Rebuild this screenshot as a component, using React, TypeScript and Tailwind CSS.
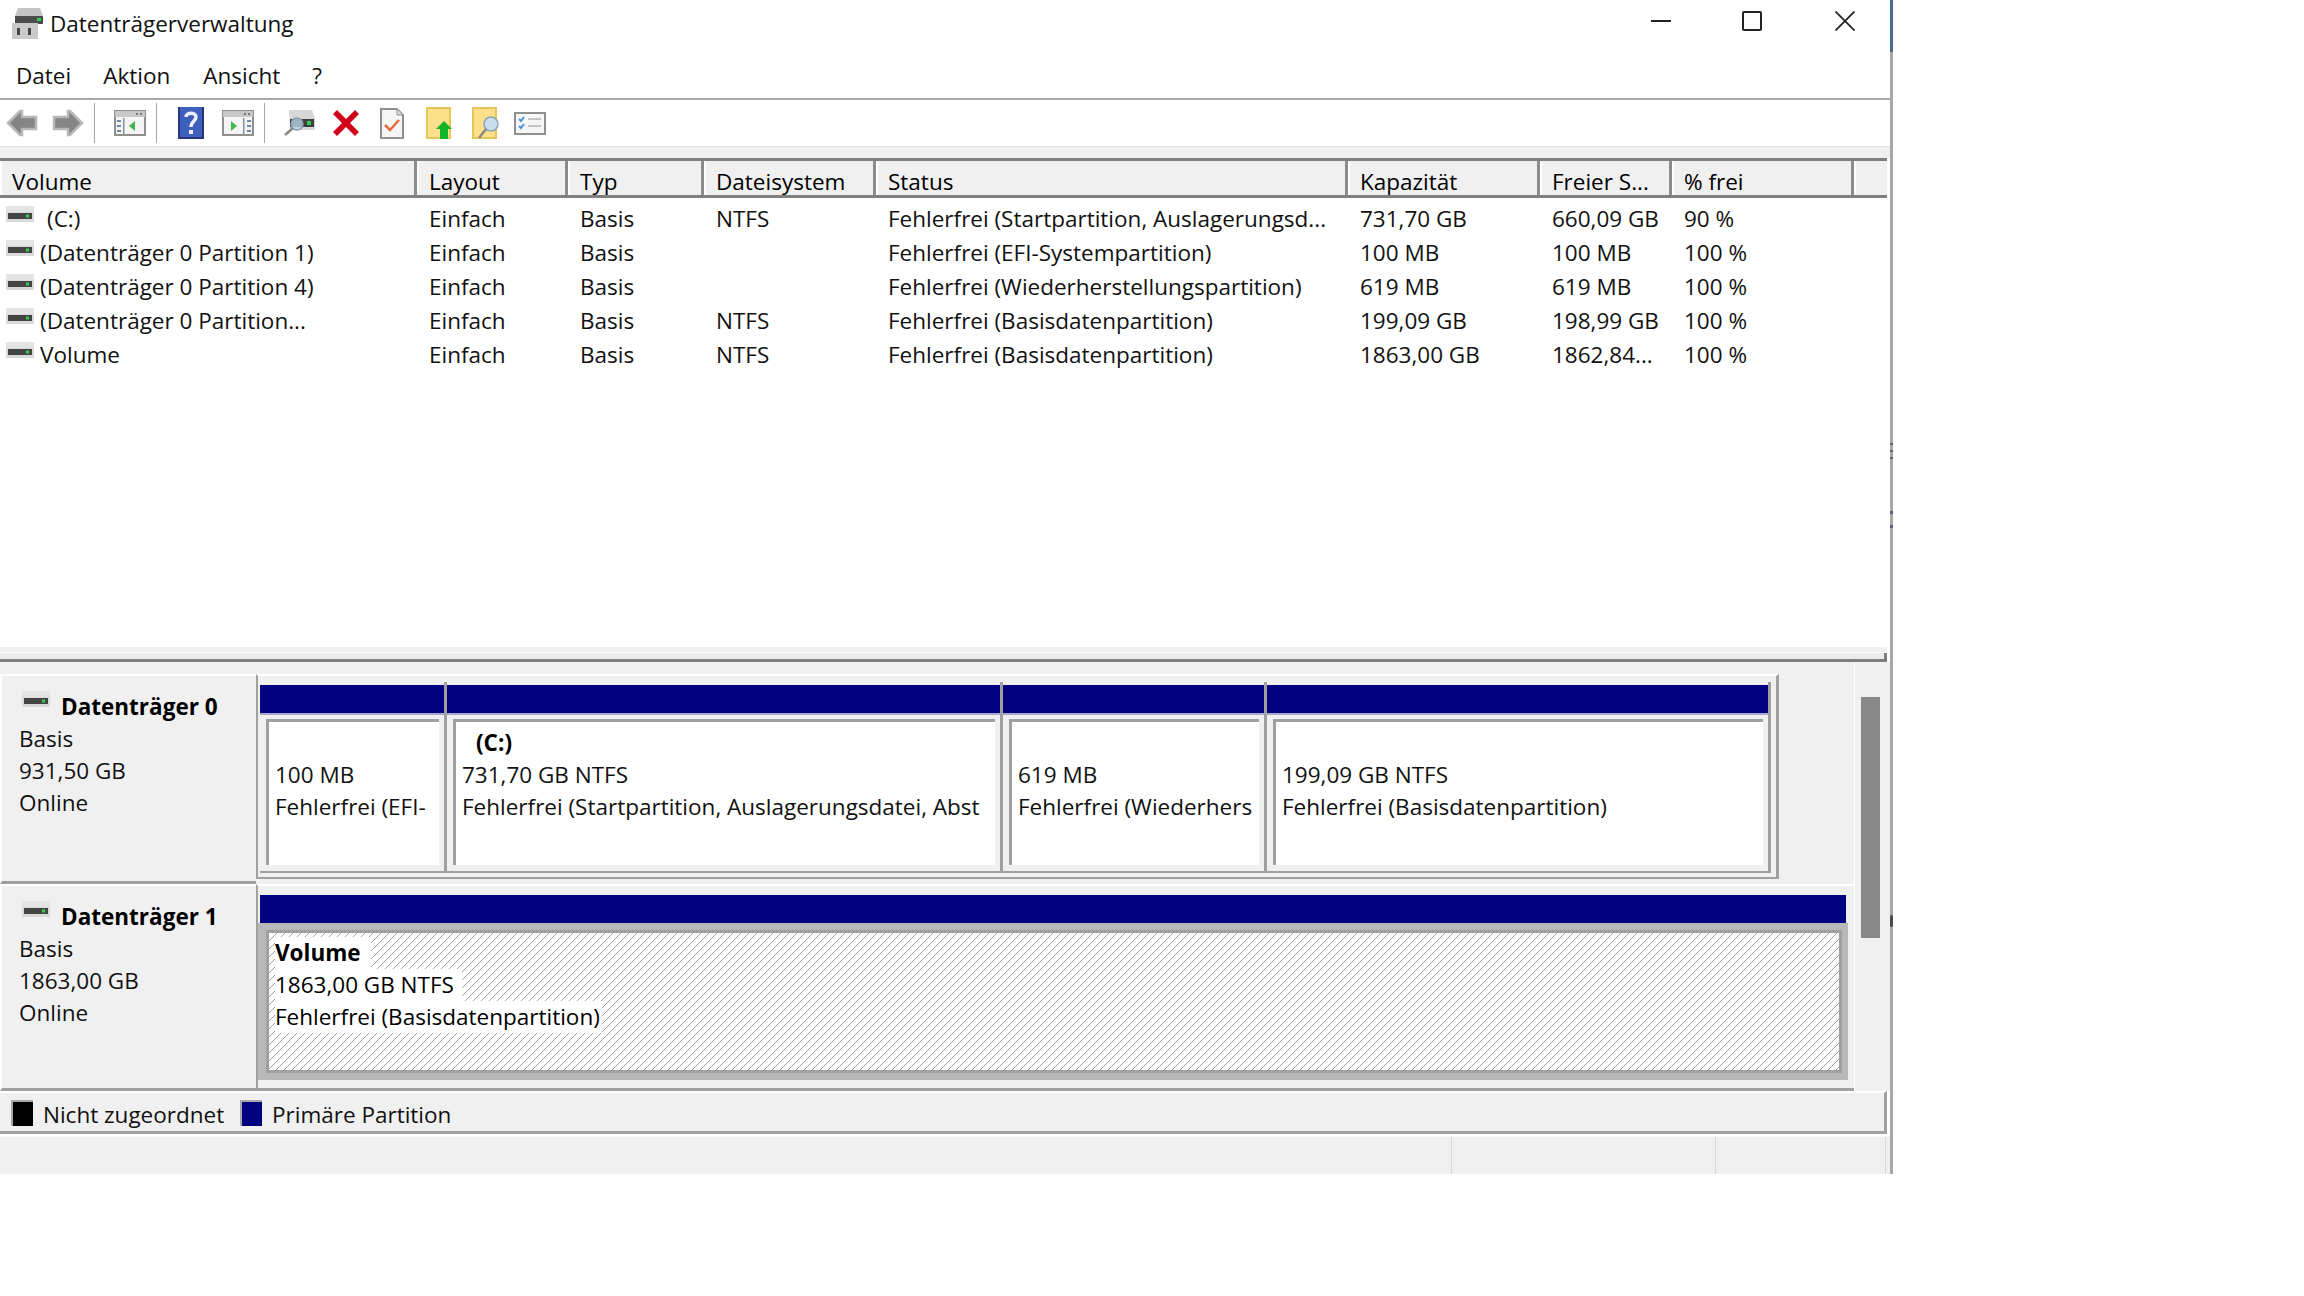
import { ReactNode } from "react";

const font = "font-['Open_Sans','Noto_Sans',sans-serif]";

const columns = [
  { title: "Volume", width: "w-[417px]" },
  { title: "Layout", width: "w-[151px]" },
  { title: "Typ", width: "w-[136px]" },
  { title: "Dateisystem", width: "w-[172px]" },
  { title: "Status", width: "w-[472px]" },
  { title: "Kapazität", width: "w-[192px]" },
  { title: "Freier S...", width: "w-[132px]" },
  { title: "% frei", width: "w-[182px]" },
  { title: "", width: "w-[33px]" },
];

const rows = [
  ["(C:)", "Einfach", "Basis", "NTFS", "Fehlerfrei (Startpartition, Auslagerungsd...", "731,70 GB", "660,09 GB", "90 %"],
  ["(Datenträger 0 Partition 1)", "Einfach", "Basis", "", "Fehlerfrei (EFI-Systempartition)", "100 MB", "100 MB", "100 %"],
  ["(Datenträger 0 Partition 4)", "Einfach", "Basis", "", "Fehlerfrei (Wiederherstellungspartition)", "619 MB", "619 MB", "100 %"],
  ["(Datenträger 0 Partition...", "Einfach", "Basis", "NTFS", "Fehlerfrei (Basisdatenpartition)", "199,09 GB", "198,99 GB", "100 %"],
  ["Volume", "Einfach", "Basis", "NTFS", "Fehlerfrei (Basisdatenpartition)", "1863,00 GB", "1862,84...", "100 %"],
];

const DriveIcon = ({ className }: { className: string }) => (
  <svg viewBox="0 0 28 16" className={className}>
    <rect x="0" y="0" width="28" height="16" fill="#d9d9d9" />
    <rect x="0" y="0" width="28" height="6" fill="#e4e4e4" />
    <rect x="2" y="7" width="24" height="6" fill="#444" />
    <rect x="20" y="8.5" width="3" height="3" fill="#35d04a" />
  </svg>
);

const BackIcon = ({ flip }: { flip?: boolean }) => (
  <svg viewBox="0 0 32 28" className={`w-[32px] h-[28px] ${flip ? "-scale-x-100" : ""}`}>
    <path d="M2 14 L14 2 L16 2 L16 8 L30 8 L30 20 L16 20 L16 26 L14 26 Z" fill="#858585" stroke="#b8b8b8" strokeWidth="2.5" />
  </svg>
);

const PaneIcon = ({ right }: { right?: boolean }) => (
  <svg viewBox="0 0 32 26" className="w-[32px] h-[26px]">
    <rect x="1" y="1" width="30" height="24" fill="#f4f4f4" stroke="#8f8f8f" strokeWidth="2" />
    <rect x="1" y="1" width="30" height="6" fill="#c8c8c8" />
    <rect x="22" y="3" width="2" height="2" fill="#777" />
    <rect x="26" y="3" width="2" height="2" fill="#777" />
    <rect x={right ? 21 : 9} y="8" width="1.5" height="16" fill="#8f8f8f" />
    {right ? (
      <>
        <path d="M9 11 L15 16 L9 21 Z" fill="#43b649" />
        <path d="M25 11 h4 M25 16 h4 M25 21 h4" stroke="#6d87a8" strokeWidth="2" />
      </>
    ) : (
      <>
        <path d="M21 11 L15 16 L21 21 Z" fill="#43b649" />
        <path d="M3 11 h4 M3 16 h4 M3 21 h4" stroke="#6d87a8" strokeWidth="2" />
      </>
    )}
  </svg>
);

const HelpIcon = () => (
  <svg viewBox="0 0 26 32" className="w-[26px] h-[32px]">
    <rect width="26" height="32" fill="#3f5fbd" />
    <rect x="0" y="0" width="2" height="32" fill="#26357f" />
    <rect x="24" y="0" width="2" height="32" fill="#26357f" />
    <rect x="0" y="30" width="26" height="2" fill="#26357f" />
    <path d="M8 10 C8 5 18 5 18 10 C18 14 13 14 13 20" fill="none" stroke="#eef" strokeWidth="3.5" />
    <rect x="11" y="23" width="4" height="4" fill="#eef" />
  </svg>
);

const SearchDriveIcon = () => (
  <svg viewBox="0 0 31 26" className="w-[31px] h-[26px]">
    <path d="M5 0 H28 L31 8 V20 H6 Z" fill="#d7d7d7" />
    <rect x="6" y="9" width="24" height="8" fill="#3d3d3d" />
    <rect x="23" y="11" width="4" height="4" fill="#35d04a" />
    <circle cx="13" cy="14" r="6" fill="#b9d3e6" fillOpacity="0.8" stroke="#8a9aa6" strokeWidth="1.5" />
    <path d="M9 18 L1 25" stroke="#888" strokeWidth="2.5" />
  </svg>
);

const DeleteIcon = () => (
  <svg viewBox="0 0 28 28" className="w-[28px] h-[28px]">
    <path d="M5 1 L14 10 L23 1 L27 5 L18 14 L27 23 L23 27 L14 18 L5 27 L1 23 L10 14 L1 5 Z" fill="#d0021b" />
  </svg>
);

const DocCheckIcon = () => (
  <svg viewBox="0 0 24 31" className="w-[24px] h-[31px]">
    <path d="M1 1 H17 L23 7 V30 H1 Z" fill="#f6f6f6" stroke="#8f8f8f" strokeWidth="2" />
    <path d="M17 1 V7 H23" fill="#ddd" stroke="#8f8f8f" />
    <path d="M5 17 L10 22 L19 12" fill="none" stroke="#e9693a" strokeWidth="2.5" />
  </svg>
);

const FolderUpIcon = () => (
  <svg viewBox="0 0 26 32" className="w-[26px] h-[32px]">
    <rect x="1" y="1" width="23" height="30" fill="#fde08a" stroke="#e6c65a" strokeWidth="2" />
    <path d="M18 14 L26 22 H22 V32 H14 V22 H10 Z" fill="#11b52a" />
  </svg>
);

const FolderSearchIcon = () => (
  <svg viewBox="0 0 28 32" className="w-[28px] h-[32px]">
    <rect x="1" y="1" width="23" height="30" fill="#fde08a" stroke="#e6c65a" strokeWidth="2" />
    <circle cx="19" cy="17" r="7" fill="#c9dfee" stroke="#8ba3b5" strokeWidth="1.5" />
    <path d="M14 22 L7 31" stroke="#888" strokeWidth="2.5" />
  </svg>
);

const TaskListIcon = () => (
  <svg viewBox="0 0 32 24" className="w-[32px] h-[24px]">
    <rect x="1" y="2" width="30" height="21" fill="#f6f6f6" stroke="#8f8f8f" strokeWidth="2" />
    <path d="M5 8 L7 10 L10 6 M5 15 L7 17 L10 13" fill="none" stroke="#4a90d9" strokeWidth="2" />
    <path d="M14 8 h13 M14 15 h13" stroke="#c4c4c4" strokeWidth="2" />
  </svg>
);

const ToolSep = () => <div className="w-[1px] h-[40px] bg-[#a8a8a8]" />;

const Toolbar = () => (
  <div className="h-[47px] bg-white border-b-[1px] border-[#e4e4e4] flex items-center pl-[6px]">
    <BackIcon />
    <div className="w-[14px]" />
    <BackIcon flip />
    <div className="w-[10px]" />
    <ToolSep />
    <div className="w-[19px]" />
    <PaneIcon />
    <div className="w-[10px]" />
    <ToolSep />
    <div className="w-[21px]" />
    <HelpIcon />
    <div className="w-[18px]" />
    <PaneIcon right />
    <div className="w-[10px]" />
    <ToolSep />
    <div className="w-[19px]" />
    <SearchDriveIcon />
    <div className="w-[17px]" />
    <DeleteIcon />
    <div className="w-[20px]" />
    <DocCheckIcon />
    <div className="w-[22px]" />
    <FolderUpIcon />
    <div className="w-[20px]" />
    <FolderSearchIcon />
    <div className="w-[14px]" />
    <TaskListIcon />
  </div>
);

const VolumeTable = () => (
  <div className="h-[489px] bg-white w-[1887px]">
    <div className="h-[40px] flex border-t-[3px] border-b-[3px] border-[#808080] bg-[#f0f0f0]">
      {columns.map((c, i) => (
        <div
          key={i}
          className={`${c.width} h-full pl-[10px] pt-[4px] leading-[34px] border-l-[2px] border-l-white whitespace-nowrap text-black ${c.title ? "border-r-[3px] border-[#8c8c8c]" : ""}`}
        >
          {c.title}
        </div>
      ))}
    </div>
    <div className="pt-[4px]">
      {rows.map((r, i) => (
        <div key={i} className="h-[34px] flex items-center leading-[34px] whitespace-nowrap text-[#111]">
          {r.map((v, j) => (
            <div key={j} className={`${columns[j].width} ${j === 0 ? "flex items-center pl-[6px]" : "pl-[12px]"}`}>
              {j === 0 && <DriveIcon className="w-[28px] h-[16px] mr-[6px] mt-[-10px]" />}
              <span className={j === 0 && i === 0 ? "ml-[7px]" : ""}>{v}</span>
            </div>
          ))}
        </div>
      ))}
    </div>
  </div>
);

const DiskLabel = ({ name, size, className }: { name: string; size: string; className: string }) => (
  <div className={`w-[256px] border-l-[2px] border-t-[2px] border-white border-b-[3px] border-b-[#a0a0a0] pl-[17px] pt-[15px] text-[#111] leading-[32px] ${className}`}>
    <div className="flex items-start h-[32px]">
      <DriveIcon className="w-[28px] h-[16px] ml-[3px] mr-[11px]" />
      <span className="font-bold text-black">{name}</span>
    </div>
    <div>Basis</div>
    <div>{size}</div>
    <div>Online</div>
  </div>
);

const Partition = ({ width, title, lines, pad }: { width: string; title?: string; lines: string[]; pad?: boolean }) => (
  <div className={`${width} h-[191px] shrink-0 border-r-[3px] border-b-[2px] border-[#a0a0a0] pt-[3px]`}>
    <div className="h-[30px] bg-[#000080] border-b-[2px] border-[#a8a8cc]" />
    <div className="pl-[6px] pr-[5px] pt-[4px]">
      <div className="h-[146px] bg-white border-t-[3px] border-l-[3px] border-[#a0a0a0] pl-[6px] pt-[5px] leading-[32px] whitespace-nowrap text-[#111]">
        <div className={`h-[32px] font-bold text-black ${pad ? "pl-[14px]" : ""}`}>{title}</div>
        {lines.map((l) => (
          <div key={l}>{l}</div>
        ))}
      </div>
    </div>
  </div>
);

const DiskPane = () => (
  <div className="h-[429px] flex bg-[#f0f0f0]">
    <div className="w-[1855px] border-r-[1px] border-white">
      <div className="h-[222px] flex pt-[12px]">
        <DiskLabel name="Datenträger 0" size="931,50 GB" className="h-[210px]" />
        <div className="w-[1523px] h-[205px] border-l-[2px] border-r-[3px] border-b-[2px] border-[#a0a0a0] border-t-[2px] border-t-white pl-[2px] pt-[6px] flex items-start">
          <Partition width="w-[187px]" lines={["100 MB", "Fehlerfrei (EFI-"]} />
          <Partition width="w-[556px]" title="(C:)" pad lines={["731,70 GB NTFS", "Fehlerfrei (Startpartition, Auslagerungsdatei, Abst"]} />
          <Partition width="w-[264px]" lines={["619 MB", "Fehlerfrei (Wiederhers"]} />
          <Partition width="w-[504px]" lines={["199,09 GB NTFS", "Fehlerfrei (Basisdatenpartition)"]} />
        </div>
      </div>
      <div className="h-[207px] flex">
        <DiskLabel name="Datenträger 1" size="1863,00 GB" className="h-[207px]" />
        <div className="w-[1598px] h-[207px] border-t-[2px] border-t-white border-b-[3px] border-b-[#a0a0a0] border-l-[2px] border-l-[#a0a0a0] pt-[9px]">
          <div className="w-[1590px]">
            <div className="h-[28px] w-[1586px] ml-[2px] bg-[#000080]" />
            <div className="h-[157px] bg-[#b8b8b8] pt-[7px] pl-[8px] pr-[6px]">
              <div className="h-[143px] border-[3px] border-[#a0a0a0] pl-[6px] pt-[4px] leading-[32px] whitespace-nowrap text-black bg-white bg-[linear-gradient(135deg,transparent_0%,transparent_44%,#a0a0a0_44%,#a0a0a0_56%,transparent_56%)] bg-size-[8px_8px]">
                <div><span className="bg-white font-bold inline-block pr-[10px] h-[32px]">Volume</span></div>
                <div><span className="bg-white inline-block pr-[8px] h-[32px]">1863,00 GB NTFS</span></div>
                <div><span className="bg-white inline-block pr-[2px] h-[32px]">Fehlerfrei (Basisdatenpartition)</span></div>
              </div>
            </div>
          </div>
        </div>
      </div>
    </div>
    <div className="pl-[6px] pt-[35px]">
      <div className="w-[19px] h-[241px] bg-[#888888]" />
    </div>
  </div>
);

const LegendItem = ({ color, width, children }: { color: string; width: string; children: ReactNode }) => (
  <div className={`flex items-center ${width}`}>
    <div className={`w-[22px] h-[26px] mt-[-4px] ${color} border-l-[2px] border-t-[2px] border-[#a8a8a8]`} />
    <span className="ml-[10px] leading-[32px] text-[#111]">{children}</span>
  </div>
);

export default function App() {
  return (
    <div className={`w-[2304px] h-[1296px] bg-white overflow-hidden text-[22.5px] ${font}`}>
      <div className="relative w-[1893px] h-[1174px] border-r-[3px] border-[#a8a8a8] flex flex-col bg-white">
        <div className="absolute right-[-3px] top-0 w-[3px] h-[52px] bg-[#4d6a8f]" />
        <div className="absolute right-[-3px] top-[443px] w-[3px] h-[2px] bg-[#5a6478]" />
        <div className="absolute right-[-3px] top-[450px] w-[3px] h-[2px] bg-[#5a6478]" />
        <div className="absolute right-[-3px] top-[457px] w-[3px] h-[2px] bg-[#5a6478]" />
        <div className="absolute right-[-3px] top-[511px] w-[3px] h-[3px] bg-[#5a6478]" />
        <div className="absolute right-[-3px] top-[525px] w-[3px] h-[3px] bg-[#5a6478]" />
        <div className="absolute right-[-3px] top-[915px] w-[3px] h-[12px] rounded-full bg-[#4a4a4a]" />
        <div className="h-[50px] flex items-center pl-[12px] pb-[3px]">
          <svg viewBox="0 0 31 31" className="w-[31px] h-[31px] mr-[7px]">
            <path d="M6 0 H28 L31 8 V16 H3 V8 Z" fill="#c4c4c4" />
            <rect x="3" y="8" width="28" height="8" fill="#4c4c4c" />
            <rect x="25" y="10" width="4" height="3" fill="#35d04a" />
            <rect x="0" y="15" width="26" height="16" fill="#c9c9c9" />
            <rect x="5" y="20" width="3" height="7" fill="#444" />
            <rect x="16" y="20" width="3" height="7" fill="#444" />
          </svg>
          <span className="text-[#111]">Datenträgerverwaltung</span>
          <div className="ml-auto flex items-center h-full pb-[6px]">
            <div className="w-[20px] h-[2px] bg-[#222] mr-[71px]" />
            <div className="w-[20px] h-[20px] border-[2px] border-[#222] rounded-[2px] mr-[73px]" />
            <svg viewBox="0 0 20 20" className="w-[20px] h-[20px] mr-[35px]">
              <path d="M0.5 0.5 L19.5 19.5 M19.5 0.5 L0.5 19.5" stroke="#222" strokeWidth="1.8" />
            </svg>
          </div>
        </div>
        <div className="h-[50px] border-b-[2px] border-[#a8a8a8] flex items-center text-[#111] pt-[4px]">
          <span className="ml-[16px]">Datei</span>
          <span className="ml-[32px]">Aktion</span>
          <span className="ml-[33px]">Ansicht</span>
          <span className="ml-[32px]">?</span>
        </div>
        <Toolbar />
        <div className="h-[11px] bg-[#f0f0f0]" />
        <VolumeTable />
        <div className="h-[6px] w-[1887px] bg-[#f0f0f0] border-b-[1px] border-white" />
        <div className="h-[9px] w-[1887px] bg-[#ececec] border-b-[3px] border-r-[3px] border-[#808080]" />
        <DiskPane />
        <div className="h-[43px] w-[1887px] bg-[#f0f0f0] border-b-[3px] border-r-[3px] border-[#a0a0a0] border-t-[2px] border-t-white flex items-center pl-[11px] pt-[5px]">
          <LegendItem color="bg-black" width="w-[229px]">Nicht zugeordnet</LegendItem>
          <LegendItem color="bg-[#000080]" width="w-[300px]">Primäre Partition</LegendItem>
        </div>
        <div className="flex-1 mt-[2px] bg-[#f0f0f0] border-t-[1px] border-[#f8f8f8] flex">
          <div className="w-[1452px] border-r-[1px] border-[#d8d8d8]" />
          <div className="w-[264px] border-r-[1px] border-[#d8d8d8]" />
          <div className="w-[170px] border-r-[1px] border-[#d8d8d8]" />
        </div>
      </div>
    </div>
  );
}
